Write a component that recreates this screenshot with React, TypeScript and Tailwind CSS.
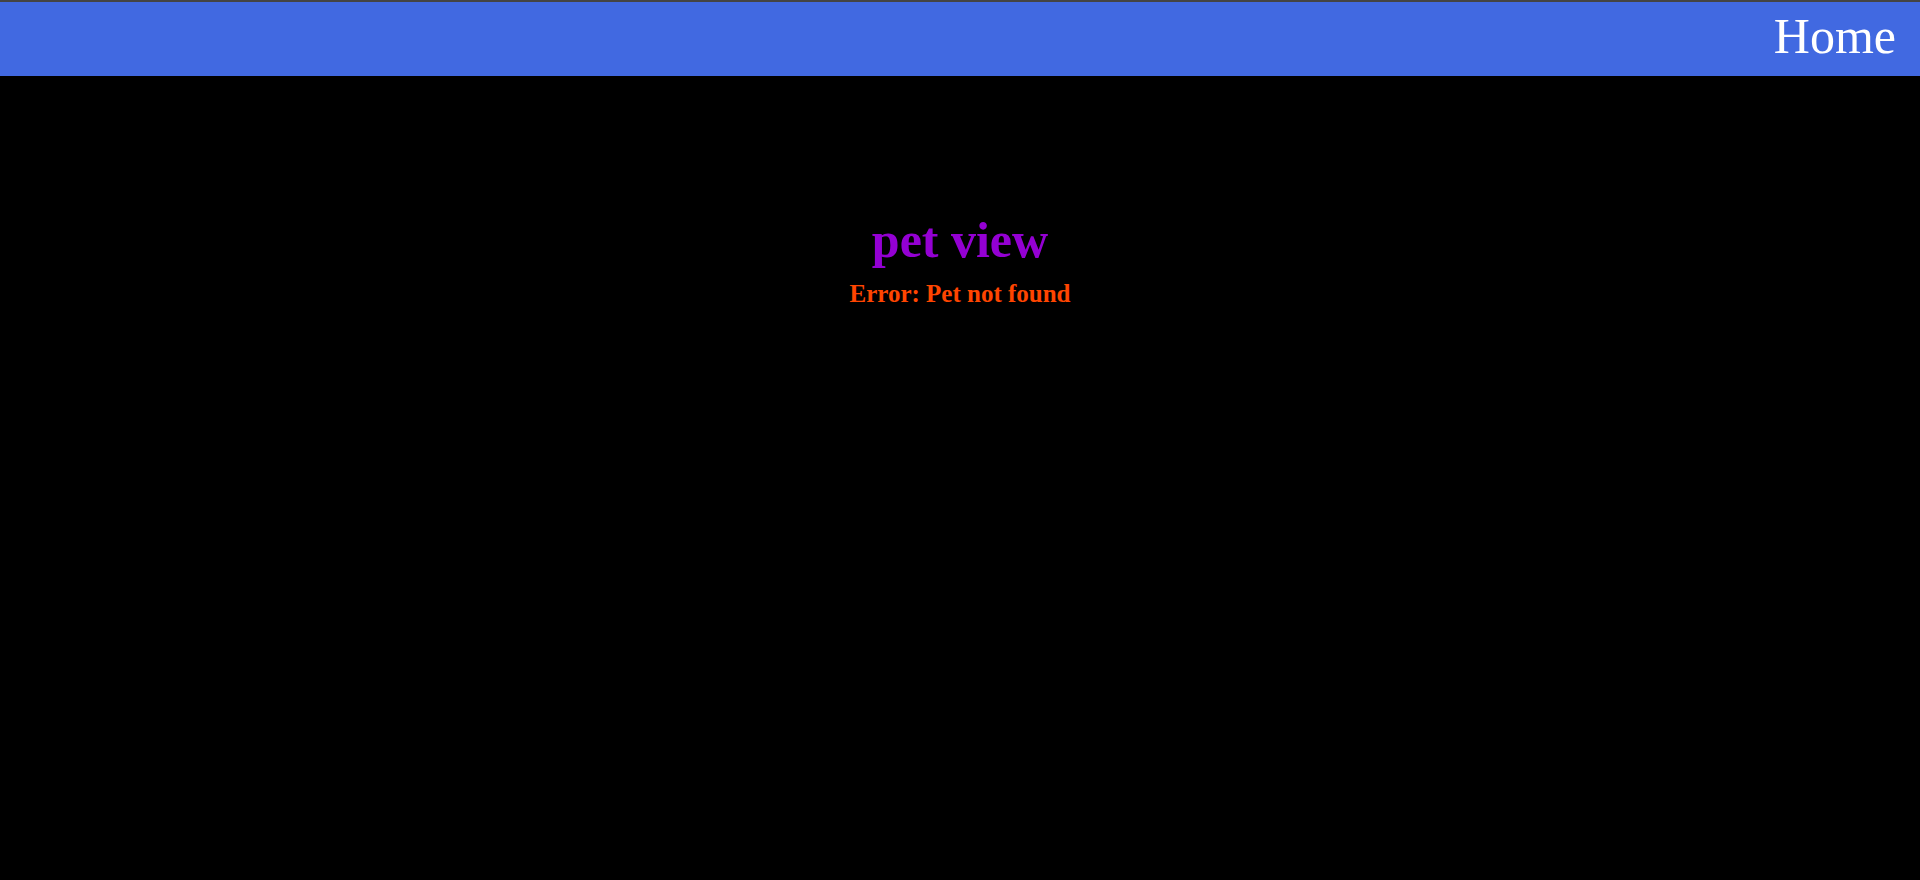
export default function App() {
  return (
    <div className="min-h-screen bg-black font-['Liberation_Serif','Times_New_Roman',serif]">
      <header className="h-[76px] border-t-2 border-[#444444] bg-[#4169e1] flex items-start justify-end pt-[9px] pr-6">
        <a className="text-[50px] leading-[50px] text-white cursor-pointer">Home</a>
      </header>

      <main className="flex flex-col items-center pt-[139px]">
        <h1 className="text-[50px] leading-[50px] font-bold text-[#9400d3]">pet view</h1>
        <p className="mt-[16px] text-[25px] leading-[25px] font-bold text-[#ff4500]">Error: Pet not found</p>
      </main>
    </div>
  )
}
